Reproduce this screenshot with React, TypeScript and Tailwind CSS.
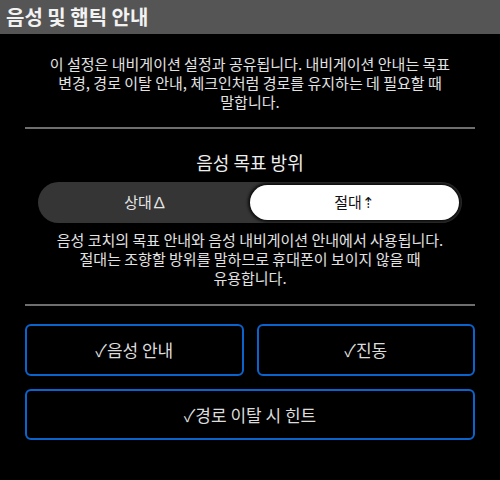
const FONT = "font-['Noto_Sans_CJK_KR','Noto_Sans',sans-serif]";

function Divider() {
  return <div className="mx-[25px] h-[2px] bg-[#6e6e6e]" />;
}

function ToggleButton({ label, className = '' }: { label: string; className?: string }) {
  return (
    <button
      className={`flex items-center justify-center rounded-[6px] border-2 border-[#0b63ce] bg-black text-[17px] text-[#dcdcdc] ${className}`}
    >
      ✓{label}
    </button>
  );
}

export default function App() {
  return (
    <div className={`h-[480px] w-[500px] overflow-hidden bg-black ${FONT}`}>
      <header className="flex h-[34px] items-center bg-[#555555] px-[6px]">
        <h1 className="text-[20px] font-bold leading-none text-[#f2f2f2]">음성 및 햅틱 안내</h1>
      </header>

      <p className="pt-[20px] text-center text-[15px] leading-[19px] text-[#e2e2e2]">
        <span className="block">이 설정은 내비게이션 설정과 공유됩니다. 내비게이션 안내는 목표</span>
        <span className="block">변경, 경로 이탈 안내, 체크인처럼 경로를 유지하는 데 필요할 때</span>
        <span className="block">말합니다.</span>
      </p>

      <div className="mt-[16px]">
        <Divider />
      </div>

      <h2 className="mt-[21px] text-center text-[18px] leading-[24px] text-[#eeeeee]">음성 목표 방위</h2>

      <div className="mx-[38px] mt-[8px] flex h-[41px] items-stretch rounded-full bg-[#353535] p-[3px]">
        <button className="flex flex-1 items-center justify-center text-[15px] text-[#e6e6e6]">상대∆</button>
        <button className="flex flex-1 items-center justify-center rounded-full bg-white text-[15px] text-[#111] shadow-[0_0_3px_2px_rgba(0,0,0,0.8)]">
          절대⇡
        </button>
      </div>

      <p className="mt-[7px] text-center text-[15px] leading-[19px] text-[#e2e2e2]">
        <span className="block">음성 코치의 목표 안내와 음성 내비게이션 안내에서 사용됩니다.</span>
        <span className="block">절대는 조향할 방위를 말하므로 휴대폰이 보이지 않을 때</span>
        <span className="block">유용합니다.</span>
      </p>

      <div className="mt-[17px]">
        <Divider />
      </div>

      <div className="mx-[25px] mt-[18px] flex flex-col gap-[13px]">
        <div className="flex gap-[13px]">
          <ToggleButton label="음성 안내" className="h-[52px] flex-1" />
          <ToggleButton label="진동" className="h-[52px] flex-1" />
        </div>
        <ToggleButton label="경로 이탈 시 힌트" className="h-[51px] w-full" />
      </div>
    </div>
  );
}
